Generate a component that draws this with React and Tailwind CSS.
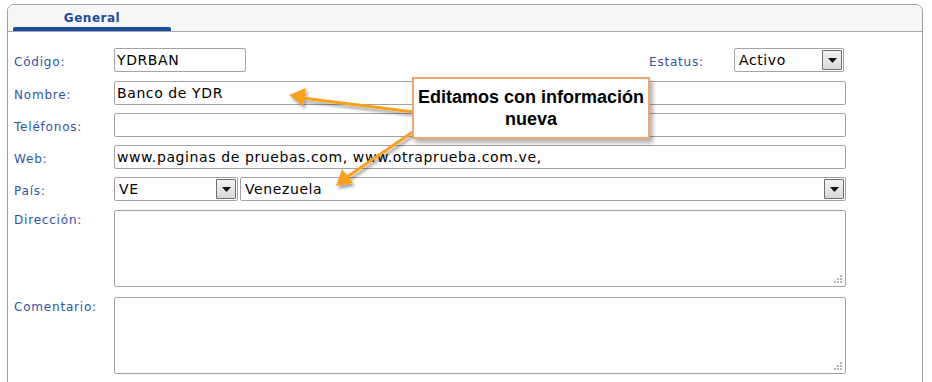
import React from 'react';

const label = "text-[12px] tracking-[0.8px] text-[#2f55a4] [font-family:'DejaVu_Sans',sans-serif]";
const input = "h-[24px] border border-[#a3a3a3] rounded-[2px] bg-white px-[2px] flex items-center text-[14px] text-black [font-family:'DejaVu_Sans',sans-serif] tracking-[0.6px]";

function DropButton() {
  return (
    <div className="w-[20px] h-full border border-[#6e6e6e] rounded-[1px] bg-gradient-to-b from-[#f4f4f4] to-[#d8d8d8] flex items-center justify-center">
      <svg width="9" height="5" viewBox="0 0 9 5"><path d="M0 0h9L4.5 5z" fill="#111" /></svg>
    </div>
  );
}

function Select({ value, className }) {
  return (
    <div className={`h-[24px] border border-[#a3a3a3] rounded-[2px] bg-white flex items-stretch p-[1px] ${className}`}>
      <div className="flex-1 flex items-center px-[3px] text-[14px] text-black [font-family:'DejaVu_Sans',sans-serif] tracking-[0.6px]">{value}</div>
      <DropButton />
    </div>
  );
}

function Grip() {
  return (
    <svg className="absolute right-[3px] bottom-[3px]" width="9" height="9" viewBox="0 0 9 9">
      {[[7, 1], [4, 4], [7, 4], [1, 7], [4, 7], [7, 7]].map(([x, y], i) => (
        <rect key={i} x={x} y={y} width="2" height="2" fill="#b5b5b5" />
      ))}
    </svg>
  );
}

function Row({ name, children, className = '' }) {
  return (
    <div className={`flex items-center ${className}`}>
      <div className={`w-[100px] shrink-0 pt-[3px] ${label}`}>{name}</div>
      {children}
    </div>
  );
}

export default function App() {
  return (
    <div className="relative w-[932px] h-[382px] bg-white overflow-hidden">
      <div className="ml-[7px] mt-[4px] w-[916px] h-[400px] border border-[#a0a0a0] rounded-t-[7px] overflow-hidden">
        {/* Tab header */}
        <div className="h-[27px] bg-[#f6f6f6] border-b border-[#a8a8a8] flex flex-col justify-end pl-[5px]">
          <div className="w-[158px] flex flex-col items-center">
            <span className="text-[12px] font-bold tracking-[0.5px] text-[#1e4b9c] [font-family:'DejaVu_Sans',sans-serif] leading-none mb-[3px]">General</span>
            <div className="w-full h-[4px] bg-[#1b4a9f] rounded-t-[2px]" />
          </div>
        </div>

        {/* Form */}
        <div className="pl-[6px] pt-[16px] flex flex-col">
          <Row name="Código:">
            <div className={`w-[132px] ${input}`}>YDRBAN</div>
            <div className="flex-1" />
            <div className={`w-[85px] ${label} pt-[3px]`}>Estatus:</div>
            <Select value="Activo" className="w-[110px]" />
            <div className="w-[78px]" />
          </Row>
          <Row name="Nombre:" className="mt-[9px]">
            <div className={`w-[732px] h-[23px] ${input}`}>Banco de YDR</div>
          </Row>
          <Row name="Teléfonos:" className="mt-[8px]">
            <div className={`w-[732px] ${input}`}></div>
          </Row>
          <Row name="Web:" className="mt-[8px]">
            <div className={`w-[732px] ${input}`}>www.paginas de pruebas.com, www.otraprueba.com.ve,</div>
          </Row>
          <Row name="País:" className="mt-[8px]">
            <Select value="VE" className="w-[124px]" />
            <Select value="Venezuela" className="w-[606px] ml-[2px]" />
          </Row>
          <div className="flex mt-[9px]">
            <div className={`w-[100px] shrink-0 pt-[1px] ${label}`}>Dirección:</div>
            <div className="relative w-[732px] h-[77px] border border-[#a3a3a3] rounded-[2px]"><Grip /></div>
          </div>
          <div className="flex mt-[10px]">
            <div className={`w-[100px] shrink-0 pt-[1px] ${label}`}>Comentario:</div>
            <div className="relative w-[732px] h-[77px] border border-[#a3a3a3] rounded-[2px]"><Grip /></div>
          </div>
        </div>
      </div>

      {/* Arrows */}
      <svg className="absolute left-0 top-0 pointer-events-none" width="932" height="382">
        <defs>
          <filter id="sh" x="-20%" y="-20%" width="140%" height="160%">
            <feDropShadow dx="2" dy="3" stdDeviation="1.5" floodColor="#000" floodOpacity="0.35" />
          </filter>
        </defs>
        <g filter="url(#sh)" stroke="#f7a11f" fill="#f7a11f" strokeWidth="3" strokeLinecap="round">
          <line x1="414" y1="112" x2="302" y2="98" />
          <path d="M289 95 L306 88 L303 106 Z" stroke="none" />
          <line x1="414" y1="131" x2="347" y2="177" />
          <path d="M336 186 L342 169 L353 183 Z" stroke="none" />
        </g>
      </svg>

      {/* Callout */}
      <div className="absolute left-[412px] top-[77px] w-[238px] h-[62px] bg-white border-2 border-[#f3a66a] shadow-[3px_4px_4px_rgba(0,0,0,0.3)] flex items-center justify-center text-center">
        <p className="text-[18px] leading-[22px] font-bold text-black [font-family:'Liberation_Sans',Arial,sans-serif]">
          Editamos con información<br />nueva
        </p>
      </div>
    </div>
  );
}
